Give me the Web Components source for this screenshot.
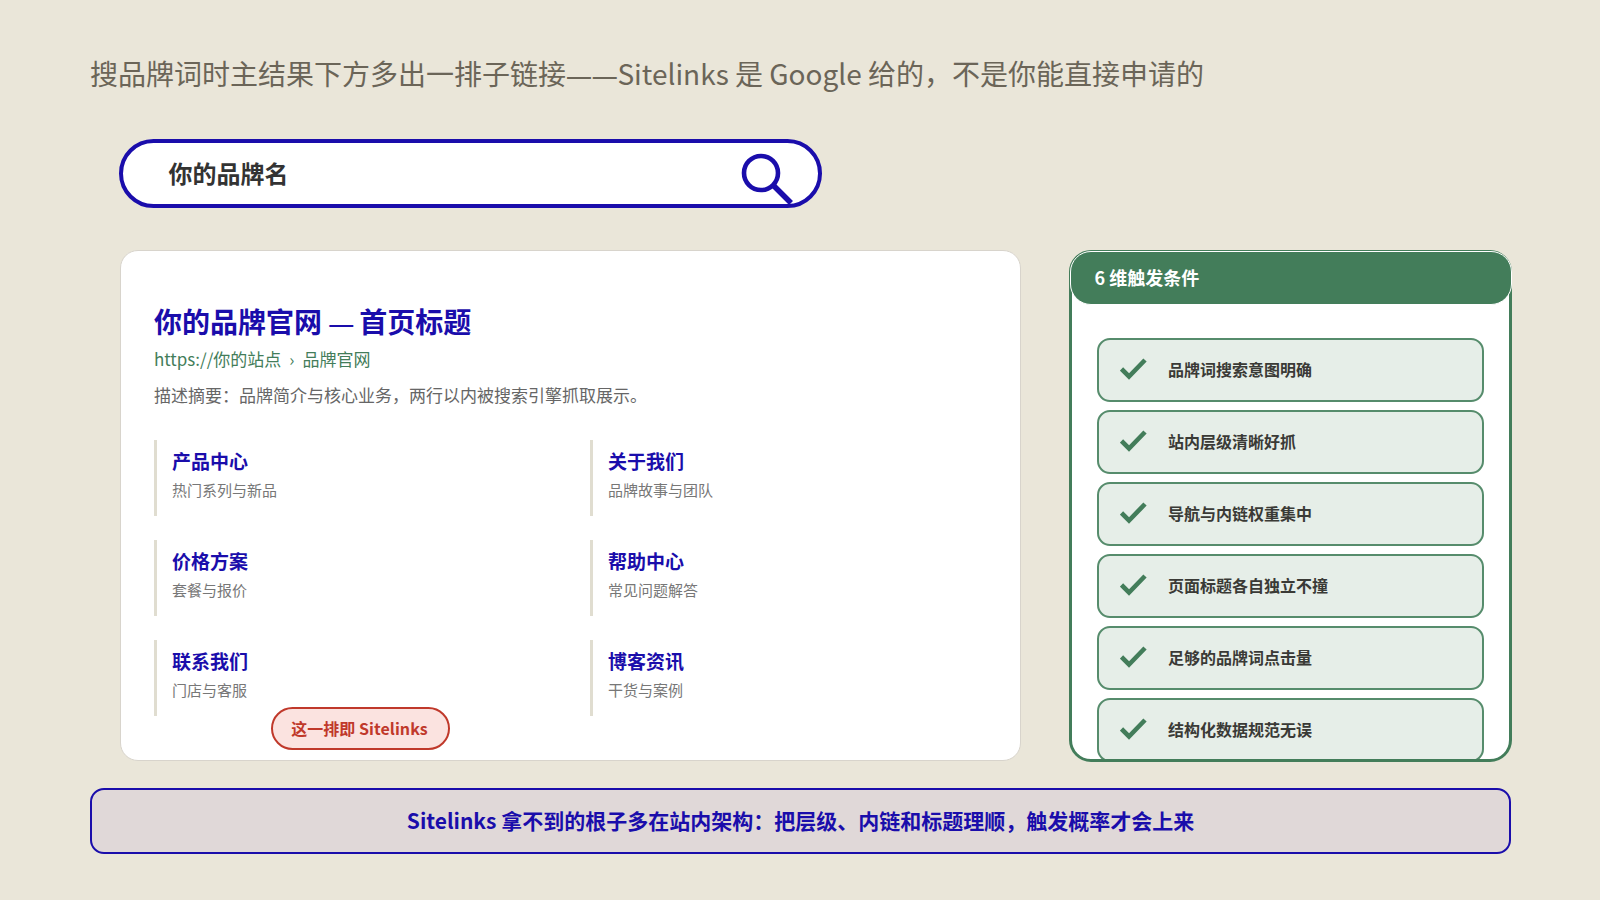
<!DOCTYPE html>
<html lang="zh-CN">
<head>
<meta charset="utf-8">
<title>Sitelinks</title>
<style>
html,body{margin:0;padding:0;background:#eae6d9;}
body{font-family:"Noto Sans CJK SC","Noto Sans",sans-serif;width:1600px;height:900px;overflow:hidden;}
.d{font-family:"Noto Sans","Noto Sans CJK SC",sans-serif;font-size:26px;letter-spacing:-.3px;}
</style>
</head>
<body>
<x-slide>
  <span slot="title">搜品牌词时主结果下方多出一排子链接<span class="d">——</span>Sitelinks 是 Google 给的，不是你能直接申请的</span>
  <x-search slot="search">你的品牌名</x-search>
  <x-result slot="result" heading="你的品牌官网 — 首页标题" site="https://你的站点" crumb="品牌官网" summary="描述摘要：品牌简介与核心业务，两行以内被搜索引擎抓取展示。" note="这一排即 Sitelinks">
    <x-sitelink name="产品中心" info="热门系列与新品"></x-sitelink>
    <x-sitelink name="关于我们" info="品牌故事与团队"></x-sitelink>
    <x-sitelink name="价格方案" info="套餐与报价"></x-sitelink>
    <x-sitelink name="帮助中心" info="常见问题解答"></x-sitelink>
    <x-sitelink name="联系我们" info="门店与客服"></x-sitelink>
    <x-sitelink name="博客资讯" info="干货与案例"></x-sitelink>
  </x-result>
  <x-panel slot="panel" heading="6 维触发条件">
    <x-check>品牌词搜索意图明确</x-check>
    <x-check>站内层级清晰好抓</x-check>
    <x-check>导航与内链权重集中</x-check>
    <x-check>页面标题各自独立不撞</x-check>
    <x-check>足够的品牌词点击量</x-check>
    <x-check>结构化数据规范无误</x-check>
  </x-panel>
  <x-banner slot="banner">Sitelinks 拿不到的根子多在站内架构：把层级、内链和标题理顺，触发概率才会上来</x-banner>
</x-slide>
<script>
function def(name, css, html){
  customElements.define(name, class extends HTMLElement{
    connectedCallback(){
      if(this.shadowRoot) return;
      const r=this.attachShadow({mode:'open'});
      const get=k=>this.getAttribute(k)||'';
      r.innerHTML='<style>'+css+'</style>'+html(get);
    }
  });
}
const FONT='font-family:"Noto Sans CJK SC","Noto Sans",sans-serif;';
def('x-slide',`
:host{display:flex;flex-direction:column;box-sizing:border-box;width:1600px;height:900px;padding:0 90px;${FONT}}
.title{height:139px;box-sizing:border-box;padding-top:51px;font-size:28px;line-height:44px;color:#6b6558;white-space:nowrap;}
.search{padding-left:28.5px;height:111px;}
.row{display:flex;gap:48px;padding-left:30px;height:512px;}
.banner{margin-top:26px;}
`,()=>`<div class="title"><slot name="title"></slot></div>
<div class="search"><slot name="search"></slot></div>
<div class="row"><slot name="result"></slot><slot name="panel"></slot></div>
<div class="banner"><slot name="banner"></slot></div>`);
def('x-search',`
:host{display:flex;align-items:center;justify-content:space-between;box-sizing:border-box;width:703px;height:69px;background:#fff;border:4px solid #1a0dab;border-radius:35px;padding:0 25px 0 46px;font-size:24px;font-weight:700;color:#333;}
span{margin-top:-3px;}
svg{display:block;margin-top:10px;flex:none;overflow:visible;}
`,()=>`<span><slot></slot></span><svg width="52" height="52" viewBox="0 0 52 52"><circle cx="20" cy="20" r="17" fill="none" stroke="#1a0dab" stroke-width="4.6"/><path d="M32 32 L50 50" stroke="#1a0dab" stroke-width="5.5" fill="none"/></svg>`);
def('x-result',`
:host{display:block;flex:none;position:relative;box-sizing:border-box;width:901px;height:511px;background:#fff;border:1px solid #d8d4cc;border-radius:18px;padding:51px 33px 0;overflow:hidden;}
h1{margin:0;height:38px;font-size:28px;line-height:38px;font-weight:700;color:#1a0dab;}
h1 span{font-family:"Noto Sans","Noto Sans CJK SC",sans-serif;font-size:26px;font-weight:400;letter-spacing:-1.5px;}
.url{margin-top:6px;font-size:17px;line-height:26px;color:#437d5a;}
.url i{font-style:normal;margin:0 8px;}
.sum{margin-top:10px;font-size:17px;line-height:26px;color:#666;}
.grid{display:grid;grid-template-columns:396px 396px;column-gap:40px;row-gap:24px;margin-top:32px;}
.note{position:absolute;left:150px;top:456px;box-sizing:border-box;height:43px;width:179px;padding:0 2px 2px 0;display:flex;align-items:center;justify-content:center;background:#fbe3e0;border:2px solid #c0392b;border-radius:22px;font-size:16px;font-weight:700;letter-spacing:.05px;color:#c0392b;}
`,g=>`<h1>${g('heading').replace('—','<span>—</span>')}</h1>
<div class="url">${g('site')}<i>›</i>${g('crumb')}</div>
<div class="sum">${g('summary')}</div>
<div class="grid"><slot></slot></div>
<div class="note">${g('note')}</div>`);
def('x-sitelink',`
:host{display:block;box-sizing:border-box;height:76px;border-left:3px solid #e0ddd0;padding:7px 0 0 15px;}
b{display:block;font-size:19px;line-height:28px;color:#1a0dab;font-weight:700;}
span{display:block;margin-top:3px;font-size:15px;line-height:24px;color:#777;}
`,g=>`<b>${g('name')}</b><span>${g('info')}</span>`);
def('x-panel',`
:host{display:flex;flex-direction:column;flex:none;box-sizing:border-box;width:443px;height:512px;background:#fff;border:3.5px solid #437d5a;border-radius:22px;}
.head{flex:none;box-sizing:border-box;height:54px;margin:-2.5px -2.5px 0;background:#437d5a;border:1px solid #fff;border-radius:21px;padding:0 0 2px 24px;display:flex;align-items:center;font-size:18px;font-weight:700;color:#fff;}
.list{flex:1;min-height:0;overflow:hidden;display:flex;flex-direction:column;gap:8px;padding:33px 25px 0 25px;}
`,g=>`<div class="head">${g('heading')}</div><div class="list"><slot></slot></div>`);
def('x-check',`
:host{display:flex;flex:none;align-items:center;box-sizing:border-box;height:64px;background:#e6eee8;border:2px solid #568c6c;border-radius:13px;padding-left:21px;font-size:16px;font-weight:700;color:#3a3a36;}
svg{flex:none;display:block;margin-right:21px;}
span{margin-top:-1px;}
`,()=>`<svg width="27" height="24" viewBox="0 0 27 24"><path d="M1.5 11 L9 18.5 L25 2" fill="none" stroke="#437d5a" stroke-width="4.6"/></svg><span><slot></slot></span>`);
def('x-banner',`
:host{display:flex;align-items:center;justify-content:center;box-sizing:border-box;width:1421px;height:66px;padding-bottom:2px;background:#e0d8d8;border:2px solid #1a0dab;border-radius:14px;font-size:21px;font-weight:700;color:#1a0dab;}
`,()=>`<slot></slot>`);
</script>
</body>
</html>
